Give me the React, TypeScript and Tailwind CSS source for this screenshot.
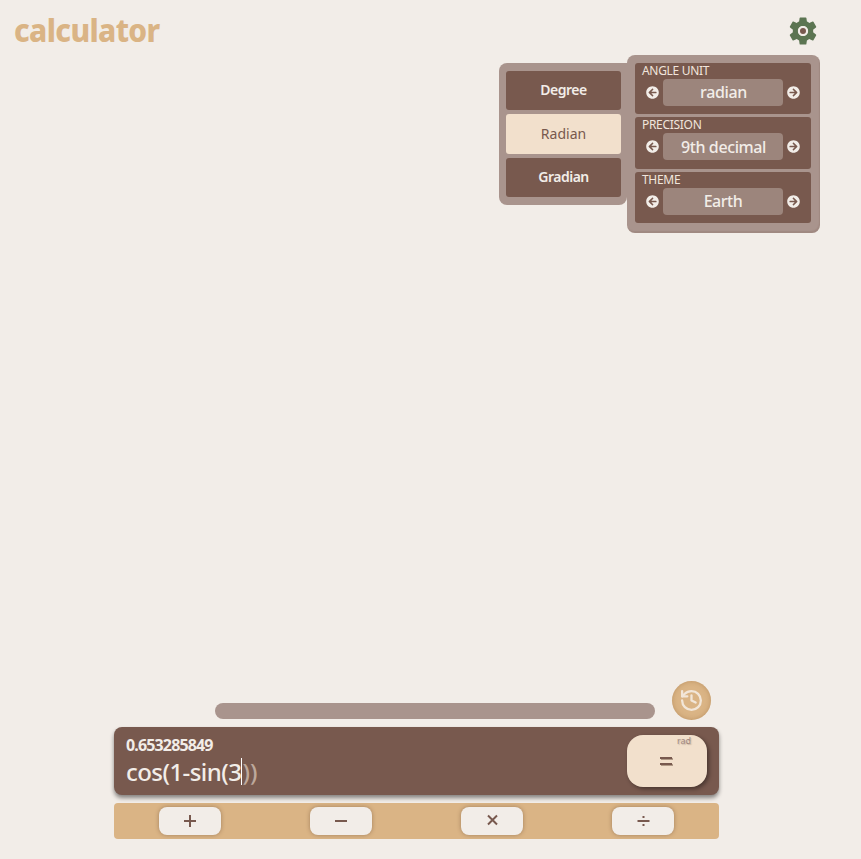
import React from 'react';
import { MdSettings } from 'react-icons/md';
import { FaArrowCircleLeft, FaArrowCircleRight } from 'react-icons/fa';
import { History } from 'lucide-react';

const settings = [
  { label: 'ANGLE UNIT', value: 'radian', width: 'tracking-[-0.35px] pl-px', box: 'h-[51px]', gap: 'mb-[3px]' },
  { label: 'PRECISION', value: '9th decimal', width: 'tracking-[-0.4px] pt-px pl-px', box: 'h-[52px]', gap: 'mb-[3px]' },
  { label: 'THEME', value: 'Earth', width: 'tracking-[-0.45px]', box: 'h-[51px]', gap: '' },
];

function Setting({ item }: { item: (typeof settings)[number] }) {
  return (
    <section className={`${item.box} ${item.gap} shrink-0 rounded-[3px] bg-[#78594e]`}>
      <h2 className="h-4 pl-[7px] text-[12px] leading-4 tracking-[-0.3px] text-[#f1e5dc]">{item.label}</h2>
      <div className="flex items-center justify-between px-[11px]">
        <button className="text-[13px] text-[#f2ede8]"><FaArrowCircleLeft /></button>
        <div className={`h-[27px] w-[120px] rounded-[4px] bg-[#9c857c] text-center text-[16px] font-medium leading-[27px] text-[#f2ede8] ${item.width}`}>{item.value}</div>
        <button className="text-[13px] text-[#f2ede8]"><FaArrowCircleRight /></button>
      </div>
    </section>
  );
}

function Operator({ children }: { children: React.ReactNode }) {
  return (
    <button className="flex h-7 w-[62px] items-center justify-center rounded-[8px] bg-[#f2ede8] text-[#78594e] shadow-[0_0_4px_rgba(80,50,30,0.4)]">
      <svg className="size-4" viewBox="0 0 16 16" fill="none" stroke="currentColor" strokeWidth="2">{children}</svg>
    </button>
  );
}

export default function App() {
  return (
    <main className="flex h-[859px] w-[861px] flex-col overflow-hidden bg-[#f2ede8] font-['Noto_Sans','Open_Sans',sans-serif]">
      <header className="flex h-[55px] shrink-0 items-start justify-between pl-[14px] pr-[41px]">
        <h1 className="mt-[10px] origin-left scale-x-[0.935] text-[32px] font-extrabold leading-10 tracking-[-0.7px] text-[#dab485]">calculator</h1>
        <button className="relative mt-[14px] text-[34px] text-[#5c7552]">
          <MdSettings />
          <span className="absolute left-[12px] top-[12px] size-[10px] rounded-full border-2 border-[#f2ede8] bg-[#78594e]" />
        </button>
      </header>

      <div className="flex h-[179px] shrink-0 items-start justify-end pr-[41px]">
        <div className="mt-2 flex h-[142px] w-[128px] flex-col gap-1 rounded-[8px] rounded-tr-none bg-[#a9948d] pb-2 pl-[7px] pr-[6px] pt-2 text-center text-[14px]">
          <button className="h-[39px] shrink-0 rounded-[3px] bg-[#78594e] pb-[3px] font-semibold tracking-[-0.5px] text-[#f2ede8]">Degree</button>
          <button className="h-10 shrink-0 rounded-[3px] bg-[#f2e0cc] pb-[2px] text-[#78594e]">Radian</button>
          <button className="h-[39px] shrink-0 rounded-[3px] bg-[#78594e] pb-[3px] font-semibold tracking-[-0.5px] text-[#f2ede8]">Gradian</button>
        </div>
        <div className="flex h-[178px] w-[193px] flex-col rounded-[8px] bg-[#a9948d] pb-2 pl-2 pr-[9px] pt-2 shadow-[inset_-1px_-2px_1px_rgba(120,89,78,0.18)]">
          {settings.map((item) => <Setting key={item.label} item={item} />)}
        </div>
      </div>

      <div className="grow" />

      <div className="ml-[114px] flex h-[46px] w-[605px] shrink-0 items-start pl-[101px]">
        <div className="mt-[22px] h-4 w-[440px] rounded-full bg-[#a9948d]" />
        <button className="ml-[17px] flex size-[39px] items-center justify-center rounded-full bg-[#dab485] pr-px text-[#f2e6d8] shadow-[inset_0_0_5px_rgba(145,98,48,0.4)]">
          <History size={25} strokeWidth={2.2} />
        </button>
      </div>

      <section className="ml-[114px] flex h-[68px] w-[605px] shrink-0 justify-between rounded-[8px] bg-[#78594e] pl-3 pr-3 text-[#f2ede8] shadow-[0_3px_4px_rgba(0,0,0,0.45)]">
        <div>
          <div className="mt-[8px] h-[20px] text-[16px] font-bold leading-[20px] tracking-[-0.85px]">0.653285849</div>
          <div className="flex h-8 w-[200px] items-center whitespace-nowrap pt-px text-[24px] leading-8 tracking-[-0.55px]">
            <span className="font-medium">cos(1-sin(3</span>
            <span className="h-[27px] w-px bg-white" />
            <span className="font-medium tracking-[0.2px] text-[#bda89b]">))</span>
          </div>
        </div>
        <button className="relative mt-2 flex h-[52px] w-20 items-center justify-center rounded-[16px] bg-[#f2e0cc] text-[#78594e] shadow-[2px_2px_4px_rgba(0,0,0,0.4)]">
          <span className="absolute right-4 top-0 text-[9px] leading-[12px] text-[#9f877f] [text-shadow:1px_1px_1px_rgba(80,50,30,0.25)]">rad</span>
          <span className="flex flex-col gap-1 pr-[2px]">
            <span className="h-[2px] w-3 bg-current shadow-[1px_1px_0_rgba(80,50,30,0.4)]" />
            <span className="h-[2px] w-3 bg-current shadow-[1px_1px_0_rgba(80,50,30,0.4)]" />
          </span>
        </button>
      </section>

      <nav className="mb-5 ml-[114px] mt-2 flex h-9 w-[605px] shrink-0 items-center justify-between rounded-[4px] bg-[#dab485] px-[45px]">
        <Operator><path d="M2 8h12M8 2v12" /></Operator>
        <Operator><path d="M2 8h12" /></Operator>
        <Operator><path d="m4 2.5 9 9m0-9-9 9" /></Operator>
        <Operator><path d="M2.5 8h12M7.5 4h2M7.5 12h2" /></Operator>
      </nav>
    </main>
  );
}
